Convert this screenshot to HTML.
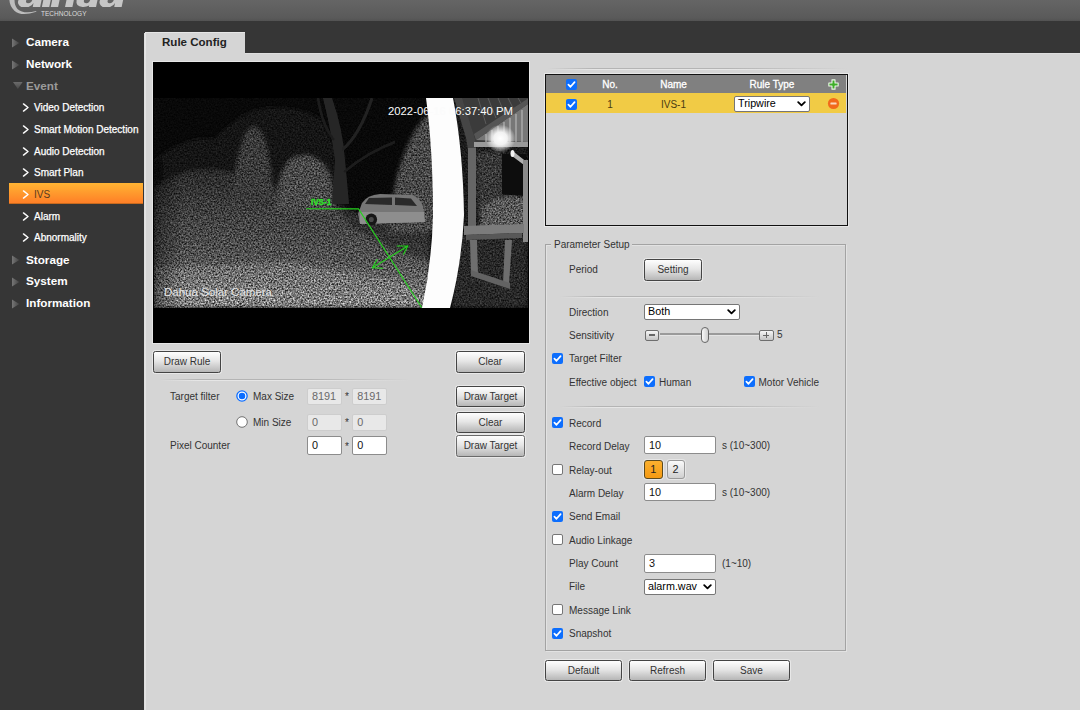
<!DOCTYPE html>
<html>
<head>
<meta charset="utf-8">
<title>IVS</title>
<style>
*{box-sizing:border-box;margin:0;padding:0}
html,body{width:1080px;height:710px;overflow:hidden}
body{position:relative;background:#d5d5d5;font-family:"Liberation Sans",sans-serif;font-size:12px;color:#333}
.abs{position:absolute}
#hdr{left:0;top:0;width:1080px;height:21px;background:linear-gradient(#656565,#5a5a5a 85%,#525252)}
#band{left:0;top:21px;width:1080px;height:32px;background:#363636}
#side{left:0;top:21px;width:144px;height:689px;background:#363636}
#sideedge{left:144px;top:33px;width:2px;height:677px;background:linear-gradient(90deg,#dcdcdc,#e6e6e6)}
#tab{left:145px;top:32px;width:100px;height:22px;background:#d5d5d5;border-left:1px solid #e6e6e6;border-top:1px solid #e6e6e6}
#tab span{position:absolute;left:16px;top:3px;font-weight:bold;font-size:11.55px;color:#222;white-space:nowrap}
#topline{left:145px;top:53px;width:935px;height:1px;background:#dedede}
.m1{position:absolute;left:26px;font-weight:bold;font-size:11.7px;color:#fff;white-space:nowrap;line-height:16px}
.m1.dim{color:#9a9a9a}
.tri{position:absolute;left:13px;width:0;height:0;border-top:5px solid transparent;border-bottom:5px solid transparent;border-left:8px solid #6e6e6e}
.trid{position:absolute;left:12px;width:0;height:0;border-left:6px solid transparent;border-right:6px solid transparent;border-top:8px solid #6e6e6e}
.m2{position:absolute;left:34px;font-size:10px;color:#fff;white-space:nowrap;line-height:14px;-webkit-text-stroke:0.25px #fff}
.chev{position:absolute;left:22px;width:8px;height:10px}
#sel{left:9px;top:183px;width:134px;height:21px;background:linear-gradient(#ffb433,#ff7f27);border-bottom:1px solid #c96a1e}
.btn{position:absolute;height:21.5px;border:1px solid #444;border-radius:2.5px;background:linear-gradient(#fefefe 0%,#e6e6e6 45%,#b6b6b6 100%);box-shadow:0 0 0 1px rgba(255,255,255,.45);font-size:10px;color:#333;text-align:center;line-height:19.4px;white-space:nowrap}
.lbl{position:absolute;margin-top:1px;white-space:nowrap;font-size:10px;color:#333;line-height:14px}
.inp{position:absolute;height:18px;background:#fff;border:1px solid #8c8c8c;border-radius:2px;font-size:10.86px;color:#111;line-height:16px;padding-left:4px;white-space:nowrap}
.inp.dis{background:#e8e8e8;color:#6a6a6a;border-color:#cdcdcd}
.cb{position:absolute;width:11px;height:11px;border-radius:2px;background:#0d6efd}
.cb svg{position:absolute;left:0;top:0}
.cb.off{background:#fff;border:1px solid #767676}
.hr{position:absolute;height:1px;background:linear-gradient(90deg,rgba(170,170,170,0),#b4b4b4 15%,#b4b4b4 60%,rgba(170,170,170,0))}
.hr2{position:absolute;height:1px;background:linear-gradient(90deg,rgba(240,240,240,0),#e6e6e6 15%,#e6e6e6 60%,rgba(240,240,240,0))}
.sel{position:absolute;height:16px;background:#fff;border:1px solid #767676;border-radius:2px;font-size:10.75px;color:#000;line-height:13px;padding-left:3px;white-space:nowrap}
.sel svg{position:absolute;right:3.2px;top:4px}
</style>
</head>
<body>
<div id="hdr" class="abs"></div>
<div id="band" class="abs"></div>
<div id="side" class="abs"></div>
<div id="sideedge" class="abs"></div>
<div id="topline" class="abs"></div>
<div id="tab" class="abs"><span>Rule Config</span></div>

<!-- logo -->
<svg class="abs" style="left:0;top:0" width="140" height="21" viewBox="0 0 140 21">
  <g transform="scale(0.125)" fill="#c6c6c6">
    <path d="M75 0 Q78 50 115 85 Q170 135 290 93 L290 88 Q190 116 140 72 Q116 44 116 0Z" fill="#bdbdbd"/>
    <g transform="scale(.985,1.1)">
    <path d="M150 0 Q135 30 172 50 L232 50 Q262 42 272 22 L266 50 L326 50 L338 0 L262 0 Q256 22 228 24 Q204 22 214 0Z"/>
    <path d="M352 0 L412 0 L400 50 L340 50Z"/>
    <path d="M424 0 L484 0 L472 50 L412 50Z M540 0 L600 0 L588 50 L528 50Z"/>
    <path d="M622 0 L682 0 Q676 24 702 24 Q726 22 732 0 L792 0 L780 50 L722 50 L724 40 Q700 52 670 50 Q612 48 622 0Z"/>
    <path d="M812 0 Q797 30 834 50 L894 50 Q924 42 934 22 L928 50 L988 50 L1000 0 L924 0 Q918 22 890 24 Q866 22 876 0Z"/>
    </g>
  </g>
  <text x="41" y="15.6" font-family="Liberation Sans, sans-serif" font-size="6.6" fill="#dcdcdc" textLength="45.5" lengthAdjust="spacingAndGlyphs">TECHNOLOGY</text>
</svg>

<!-- sidebar -->
<svg class="abs" style="left:12.3px;top:37.5px" width="8" height="10" viewBox="0 0 8 10"><defs><linearGradient id="tg37" x1="0" y1="0" x2="1" y2="0"><stop offset="0" stop-color="#767676"/><stop offset="1" stop-color="#444"/></linearGradient></defs><path d="M0 0.4 L7.4 5 L0 9.6Z" fill="url(#tg37)"/></svg><div class="m1" style="top:34.4px">Camera</div>
<svg class="abs" style="left:12.3px;top:59.5px" width="8" height="10" viewBox="0 0 8 10"><defs><linearGradient id="tg59" x1="0" y1="0" x2="1" y2="0"><stop offset="0" stop-color="#767676"/><stop offset="1" stop-color="#444"/></linearGradient></defs><path d="M0 0.4 L7.4 5 L0 9.6Z" fill="url(#tg59)"/></svg><div class="m1" style="top:56.2px">Network</div>
<svg class="abs" style="left:12.8px;top:81.8px" width="10" height="8" viewBox="0 0 10 8"><defs><linearGradient id="tgd" x1="0" y1="0" x2="0" y2="1"><stop offset="0" stop-color="#6c6c6c"/><stop offset="1" stop-color="#484848"/></linearGradient></defs><path d="M0 0 L9.6 0 L4.8 7Z" fill="url(#tgd)"/></svg><div class="m1 dim" style="top:78.2px">Event</div>
<div id="sel" class="abs"></div>
<div class="m2" style="top:101.2px">Video Detection</div>
<div class="m2" style="top:122.9px">Smart Motion Detection</div>
<div class="m2" style="top:144.5px">Audio Detection</div>
<div class="m2" style="top:166.2px">Smart Plan</div>
<div class="m2" style="top:187.9px;color:#5a3a20;-webkit-text-stroke:0">IVS</div>
<div class="m2" style="top:209.5px">Alarm</div>
<div class="m2" style="top:231.2px">Abnormality</div>
<svg class="abs" style="left:12.3px;top:254.5px" width="8" height="10" viewBox="0 0 8 10"><defs><linearGradient id="tg254" x1="0" y1="0" x2="1" y2="0"><stop offset="0" stop-color="#767676"/><stop offset="1" stop-color="#444"/></linearGradient></defs><path d="M0 0.4 L7.4 5 L0 9.6Z" fill="url(#tg254)"/></svg><div class="m1" style="top:251.6px">Storage</div>
<svg class="abs" style="left:12.3px;top:276.5px" width="8" height="10" viewBox="0 0 8 10"><defs><linearGradient id="tg276" x1="0" y1="0" x2="1" y2="0"><stop offset="0" stop-color="#767676"/><stop offset="1" stop-color="#444"/></linearGradient></defs><path d="M0 0.4 L7.4 5 L0 9.6Z" fill="url(#tg276)"/></svg><div class="m1" style="top:273.2px">System</div>
<svg class="abs" style="left:12.3px;top:298.5px" width="8" height="10" viewBox="0 0 8 10"><defs><linearGradient id="tg298" x1="0" y1="0" x2="1" y2="0"><stop offset="0" stop-color="#767676"/><stop offset="1" stop-color="#444"/></linearGradient></defs><path d="M0 0.4 L7.4 5 L0 9.6Z" fill="url(#tg298)"/></svg><div class="m1" style="top:294.8px">Information</div>

<svg class="chev" style="top:102.4px" viewBox="0 0 8 10"><path d="M1.5 1.9 L6 5.5 L1.5 9.1" fill="none" stroke="#fff" stroke-width="1.4" stroke-linecap="round" stroke-linejoin="round"/></svg>
<svg class="chev" style="top:124.1px" viewBox="0 0 8 10"><path d="M1.5 1.9 L6 5.5 L1.5 9.1" fill="none" stroke="#fff" stroke-width="1.4" stroke-linecap="round" stroke-linejoin="round"/></svg>
<svg class="chev" style="top:145.7px" viewBox="0 0 8 10"><path d="M1.5 1.9 L6 5.5 L1.5 9.1" fill="none" stroke="#fff" stroke-width="1.4" stroke-linecap="round" stroke-linejoin="round"/></svg>
<svg class="chev" style="top:167.4px" viewBox="0 0 8 10"><path d="M1.5 1.9 L6 5.5 L1.5 9.1" fill="none" stroke="#fff" stroke-width="1.4" stroke-linecap="round" stroke-linejoin="round"/></svg>
<svg class="chev" style="top:189.1px" viewBox="0 0 8 10"><path d="M1.5 1.9 L6 5.5 L1.5 9.1" fill="none" stroke="#fff" stroke-width="1.4" stroke-linecap="round" stroke-linejoin="round"/></svg>
<svg class="chev" style="top:210.7px" viewBox="0 0 8 10"><path d="M1.5 1.9 L6 5.5 L1.5 9.1" fill="none" stroke="#fff" stroke-width="1.4" stroke-linecap="round" stroke-linejoin="round"/></svg>
<svg class="chev" style="top:232.4px" viewBox="0 0 8 10"><path d="M1.5 1.9 L6 5.5 L1.5 9.1" fill="none" stroke="#fff" stroke-width="1.4" stroke-linecap="round" stroke-linejoin="round"/></svg>
<!-- video -->
<div class="abs" style="left:152px;top:61px;width:378px;height:283px;background:#e6e6e6"></div>
<svg class="abs" style="left:153px;top:62px" width="376" height="281" viewBox="153 62 376 281">
<defs>
<filter id="nz" x="0" y="0" width="100%" height="100%" color-interpolation-filters="sRGB">
  <feTurbulence type="fractalNoise" baseFrequency="0.62" numOctaves="2" seed="7" result="t"/>
  <feColorMatrix in="t" type="matrix" values="1.7 0 0 0 -0.36  1.7 0 0 0 -0.36  1.7 0 0 0 -0.36  0 0 0 0 1" result="n"/>
  <feComposite in="SourceGraphic" in2="n" operator="arithmetic" k1="1.5" k2="0.22" k3="0" k4="0"/>
</filter>
<filter id="b2"><feGaussianBlur stdDeviation="2"/></filter>
<filter id="b4"><feGaussianBlur stdDeviation="4"/></filter>
<filter id="b1"><feGaussianBlur stdDeviation="0.7"/></filter>
<linearGradient id="vig" x1="0" y1="0" x2="1" y2="0"><stop offset="0" stop-color="#000" stop-opacity=".45"/><stop offset="1" stop-color="#000" stop-opacity="0"/></linearGradient>
<linearGradient id="gnd" x1="0" y1="0" x2="0" y2="1"><stop offset="0" stop-color="#2c2c2c"/><stop offset=".33" stop-color="#444"/><stop offset=".65" stop-color="#565656"/><stop offset="1" stop-color="#808080"/></linearGradient>
<radialGradient id="lamp"><stop offset="0" stop-color="#fff"/><stop offset=".45" stop-color="#f2f2f2"/><stop offset="1" stop-color="#fff" stop-opacity="0"/></radialGradient>
<clipPath id="imgclip"><rect x="154" y="98" width="374" height="210"/></clipPath>
</defs>
<rect x="153" y="62" width="376" height="281" fill="#000"/>
<g clip-path="url(#imgclip)">
 <g filter="url(#nz)">
  <rect x="154" y="98" width="374" height="210" fill="#090909"/>
  <g filter="url(#b2)">
   <!-- faint upper-left foliage -->
   <path d="M154 160 Q185 135 215 138 Q240 112 262 108 Q300 104 322 120 L336 150 L336 200 L154 200Z" fill="#181818"/>
   <!-- ground -->
   <path d="M154 190 Q172 172 198 170 Q225 168 240 176 L300 196 L336 204 L360 214 L430 226 L430 308 L154 308Z" fill="url(#gnd)"/>
   <path d="M154 268 L290 262 L400 280 L430 300 L430 308 L154 308Z" fill="#a0a0a0" opacity=".3"/>
   <path d="M336 206 L430 224 L430 262 L392 250 L350 226Z" fill="#000" opacity=".3"/>
   <rect x="150" y="160" width="34" height="150" fill="url(#vig)"/>
   <!-- centre bushes -->
   <path d="M232 205 Q234 160 246 134 Q254 120 262 134 Q270 150 274 205Z" fill="#3c3c3c"/>
   <path d="M276 210 Q278 172 290 160 Q310 148 326 168 Q334 180 334 212Z" fill="#4e4e4e"/>
   <!-- bush left of pole -->
   <path d="M390 232 Q392 185 402 160 Q412 130 426 116 L436 112 L436 232Z" fill="#4c4c4c"/>
   <!-- right of pole: dark base, foliage, brush pile, ground -->
   <rect x="452" y="98" width="76" height="210" fill="#1c1c1c"/>
   <path d="M476 152 L503 152 Q506 190 498 208 L478 212Z" fill="#3a3a3a"/>
   <path d="M482 208 Q500 192 528 198 L528 228 L480 228Z" fill="#5c5c5c"/>
   <path d="M452 236 L528 232 L528 308 L452 308Z" fill="#2a2a2a"/>
  </g>
 </g>
 <!-- smooth structures -->
 <g filter="url(#b1)">
  <!-- trees -->
  <path d="M332 204 L335 160 Q331 130 323 98 L332 98 Q343 130 345 160 L349 204Z" fill="#282828"/>
  <path d="M342 150 Q360 135 372 98" stroke="#232323" stroke-width="3" fill="none"/>
  <path d="M344 172 Q368 152 395 142" stroke="#1f1f1f" stroke-width="2.5" fill="none"/>
  <path d="M334 140 Q322 125 318 98" stroke="#1e1e1e" stroke-width="2.5" fill="none"/>
  <!-- roof -->
  <path d="M458 98 L528 98 L528 142 L476 142 L470 128Z" fill="#3a3a3a"/>
  <path d="M476 140 L528 104 L528 142Z" fill="#777"/>
  <path d="M474 134 L528 98.5 L528 104 L476 140Z" fill="#555"/>
  <g stroke="#5c5c5c" stroke-width="1"><path d="M478 98 L486 124 M488 98 L496 118 M498 98 L504 112 M508 98 L513 108 M518 98 L521 103"/></g>
  <g stroke="#b5b5b5" stroke-width="1.2"><path d="M486 134 L486 142 M492 130 L492 142 M498 126 L498 142 M504 122 L504 142 M510 118 L510 142 M516 114 L516 142 M522 110 L522 142"/></g>
  <path d="M454 98 L462 98 L476 142 L476 150 L468 150 L466 138Z" fill="#454545"/>
  <rect x="474" y="142" width="54" height="5" fill="#9a9a9a"/>
  <rect x="468" y="148" width="8" height="78" fill="#666"/>
  <path d="M502 154 L526 154 L526 196 L502 194Z" fill="#080808"/>
  <path d="M514 152 L528 163 L528 168 L512 156Z" fill="#b0b0b0"/>
  <rect x="523" y="160" width="5" height="82" fill="#8a8a8a"/>
  <!-- table -->
  <path d="M464 226 L524 224 L524 233 L464 235Z" fill="#7c7c7c"/>
  <path d="M466 235 L522 233 L522 238 L466 240Z" fill="#595959"/>
  <path d="M470 240 L477 240 L478 274 L471 274Z" fill="#6e6e6e"/>
  <path d="M505 240 L512 240 L509 284 L503 284Z" fill="#6e6e6e"/>
  <path d="M471 270 L510 283 L510 289 L471 276Z" fill="#646464"/>
  <!-- car -->
  <path d="M358 214 L362 203 Q367 195 380 194 L412 195 Q419 197 423 206 L425 222 L360 224Z" fill="#767676"/>
  <path d="M360 212 L424 212 L425 222 L360 224Z" fill="#8e8e8e"/>
  <path d="M365 204 L369 198 L392 197.5 L392 205Z M395 197.5 L411 198.5 L417 206 L395 205Z" fill="#2a2a2a"/>
  <ellipse cx="371.3" cy="219.5" rx="5.8" ry="6" fill="#181818"/>
  <ellipse cx="371.3" cy="219.5" rx="2.4" ry="2.6" fill="#4a4a4a"/>
 </g>
 <!-- lamp -->
 <ellipse cx="500.5" cy="138.5" rx="15" ry="14" fill="url(#lamp)"/>
 <ellipse cx="512.5" cy="153.5" rx="2" ry="3.5" fill="#f4f4f4"/>
 <!-- pole -->
 <path d="M426 98 Q433 150 433 215 Q432 262 422 308 L450 308 Q462 262 464 215 Q463 150 453 98Z" fill="#fdfdfd" filter="url(#b1)"/>
</g>
<!-- overlay text -->
<text x="388" y="114.5" font-family="Liberation Sans, sans-serif" font-size="11.2" fill="#fbfbfb" textLength="125" lengthAdjust="spacingAndGlyphs">2022-06-16 06:37:40 PM</text>
<text x="164" y="296" font-family="Liberation Sans, sans-serif" font-size="11.2" fill="#e4e4e4" textLength="108" lengthAdjust="spacingAndGlyphs">Dahua Solar Camera</text>
<!-- rule -->
<g stroke="#24d41d" stroke-width="1.1" fill="none" stroke-linecap="round">
 <path d="M306.7 208.8 L358.5 208.9 L421.5 307.3"/>
 <path d="M372.5 267.8 L407.7 246"/>
 <path d="M397.2 246 L407.7 246 L403.5 254.3"/>
 <path d="M377 259.5 L372.5 267.8 L382.7 268.3"/>
</g>
<text x="310.9" y="205.4" font-family="Liberation Sans, sans-serif" font-size="9.6" font-weight="bold" fill="#2fe327" stroke="#2fe327" stroke-width=".35" textLength="20.4" lengthAdjust="spacingAndGlyphs">IVS-1</text>
</svg>


<!-- form -->
<div class="btn" style="left:153px;top:351.2px;width:68px;">Draw Rule</div>
<div class="btn" style="left:456px;top:351.2px;width:68.5px;">Clear</div>
<div class="hr" style="left:160px;top:379px;width:250px"></div><div class="hr2" style="left:160px;top:380px;width:250px"></div>
<div class="lbl" style="left:170px;top:389px;">Target filter</div>
<svg class="abs" style="left:234.7px;top:388.9px" width="14" height="14" viewBox="0 0 14 14"><circle cx="7" cy="7" r="5.15" fill="#fff" stroke="#0a6cff" stroke-width="1.3"/><circle cx="7" cy="7" r="3.25" fill="#0a6cff"/></svg>
<div class="lbl" style="left:253px;top:389px;">Max Size</div>
<div class="inp dis" style="left:307px;top:387.5px;width:34.5px;height:17.5px;line-height:15.5px;">8191</div>
<div class="lbl" style="left:345px;top:389px;">*</div>
<div class="inp dis" style="left:352.2px;top:387.5px;width:34.4px;height:17.5px;line-height:15.5px;">8191</div>
<div class="btn" style="left:456px;top:385.5px;width:69px;">Draw Target</div>
<svg class="abs" style="left:234.7px;top:414.5px" width="14" height="14" viewBox="0 0 14 14"><circle cx="7" cy="7" r="5.3" fill="#fff" stroke="#727272" stroke-width="1"/></svg>
<div class="lbl" style="left:253px;top:415px;">Min Size</div>
<div class="inp dis" style="left:307px;top:413.5px;width:34.5px;height:17.5px;line-height:15.5px;">0</div>
<div class="lbl" style="left:345px;top:415px;">*</div>
<div class="inp dis" style="left:352.2px;top:413.5px;width:34.4px;height:17.5px;line-height:15.5px;">0</div>
<div class="btn" style="left:456px;top:411.5px;width:69px;">Clear</div>
<div class="lbl" style="left:170px;top:437.5px;">Pixel Counter</div>
<div class="inp" style="left:307px;top:436px;width:34.5px;height:18.5px;line-height:16.5px;">0</div>
<div class="lbl" style="left:345px;top:438.5px;">*</div>
<div class="inp" style="left:352.2px;top:436px;width:34.4px;height:18.5px;line-height:16.5px;">0</div>
<div class="btn" style="left:456px;top:435px;width:69px;border-color:#6a6a6a">Draw Target</div>
<div class="hr" style="left:548px;top:68px;width:300px"></div><div class="hr2" style="left:548px;top:69px;width:300px"></div>
<div class="abs" style="left:545px;top:74px;width:303px;height:152px;border:1px solid #111;box-shadow:0 0 0 1px #e6e6e6"></div>
<div class="abs" style="left:546px;top:75px;width:300px;height:18px;background:#808080"></div>
<div class="abs" style="left:546px;top:93px;width:300px;height:20px;background:#f1cb45"></div>
<div class="cb" style="left:566px;top:79px"><svg width="11" height="11" viewBox="0 0 11 11"><path d="M2.4 5.7 L4.5 7.8 L8.6 3.1" fill="none" stroke="#fff" stroke-width="1.7" stroke-linecap="round" stroke-linejoin="round"/></svg></div>
<div class="cb" style="left:566px;top:99px"><svg width="11" height="11" viewBox="0 0 11 11"><path d="M2.4 5.7 L4.5 7.8 L8.6 3.1" fill="none" stroke="#fff" stroke-width="1.7" stroke-linecap="round" stroke-linejoin="round"/></svg></div>
<div class="lbl" style="left:570px;width:80px;text-align:center;top:77.2px;color:#fff;-webkit-text-stroke:0.3px #fff">No.</div>
<div class="lbl" style="left:633.5px;width:80px;text-align:center;top:77.2px;color:#fff;-webkit-text-stroke:0.3px #fff">Name</div>
<div class="lbl" style="left:732px;width:80px;text-align:center;top:77.2px;color:#fff;-webkit-text-stroke:0.3px #fff">Rule Type</div>
<div class="lbl" style="left:570px;width:80px;text-align:center;top:96.7px;color:#4a3b12">1</div>
<div class="lbl" style="left:633.5px;width:80px;text-align:center;top:96.7px;color:#4a3b12">IVS-1</div>
<div class="sel" style="left:734px;top:96px;width:76px">Tripwire<svg width="9" height="6" viewBox="0 0 9 6"><path d="M1.2 1.2 L4.5 4.4 L7.8 1.2" fill="none" stroke="#000" stroke-width="1.8" stroke-linecap="round" stroke-linejoin="round"/></svg></div>
<svg class="abs" style="left:828.3px;top:79.4px" width="11" height="11" viewBox="0 0 13 13"><path d="M4.7 1 h3.6 v3.7 h3.7 v3.6 h-3.7 v3.7 h-3.6 v-3.7 h-3.7 v-3.6 h3.7z" fill="#3fae2a" stroke="#eef7ea" stroke-width="1.3" stroke-linejoin="round"/></svg>
<svg class="abs" style="left:826.5px;top:96.6px" width="13" height="13" viewBox="0 0 13 13"><circle cx="6.5" cy="6.5" r="5.6" fill="#f26a1b"/><rect x="3.4" y="5.4" width="6.2" height="2.1" rx=".6" fill="#fbd9bf"/></svg>
<div class="abs" style="left:545px;top:244px;width:301px;height:407px;border:1px solid #a3a3a3;box-shadow:inset 1px 1px 0 #e2e2e2, 1px 1px 0 #e2e2e2"></div>
<div class="abs" style="left:551px;top:238px;width:81px;height:14px;background:#d5d5d5"></div>
<div class="lbl" style="left:554px;top:236.5px;">Parameter Setup</div>
<div class="lbl" style="left:569px;top:262px;">Period</div>
<div class="btn" style="left:644px;top:259px;width:58px;">Setting</div>
<div class="hr" style="left:560px;top:296px;width:260px"></div><div class="hr2" style="left:560px;top:297px;width:260px"></div>
<div class="lbl" style="left:569px;top:304.5px;">Direction</div>
<div class="sel" style="left:644px;top:303.5px;width:96px">Both<svg width="9" height="6" viewBox="0 0 9 6"><path d="M1.2 1.2 L4.5 4.4 L7.8 1.2" fill="none" stroke="#000" stroke-width="1.8" stroke-linecap="round" stroke-linejoin="round"/></svg></div>
<div class="lbl" style="left:569px;top:328px;">Sensitivity</div>
<div class="abs" style="left:660px;top:333px;width:100px;height:2px;background:#9a9a9a;box-shadow:0 1px 0 #e4e4e4"></div>
<div class="abs" style="left:645px;top:329.5px;width:14px;height:11.5px;border:1px solid #6e6e6e;border-radius:2px;background:linear-gradient(#f6f6f6,#c4c4c4)"><div style="position:absolute;left:3px;top:3.7px;width:6px;height:1.5px;background:#666"></div></div>
<div class="abs" style="left:759px;top:329.5px;width:14.5px;height:11.5px;border:1px solid #6e6e6e;border-radius:2px;background:linear-gradient(#f6f6f6,#c4c4c4)"><div style="position:absolute;left:3.2px;top:4.1px;width:6px;height:1px;background:#666"></div><div style="position:absolute;left:5.7px;top:1.6px;width:1px;height:6px;background:#666"></div></div>
<div class="abs" style="left:701px;top:327px;width:8px;height:15.5px;border:1px solid #666;border-radius:4px;background:linear-gradient(90deg,#fafafa,#cfcfcf)"></div>
<div class="lbl" style="left:777px;top:327px;">5</div>
<div class="cb" style="left:552px;top:353px"><svg width="11" height="11" viewBox="0 0 11 11"><path d="M2.4 5.7 L4.5 7.8 L8.6 3.1" fill="none" stroke="#fff" stroke-width="1.7" stroke-linecap="round" stroke-linejoin="round"/></svg></div>
<div class="lbl" style="left:569px;top:351px;">Target Filter</div>
<div class="lbl" style="left:569px;top:375px;">Effective object</div>
<div class="cb" style="left:644px;top:376px"><svg width="11" height="11" viewBox="0 0 11 11"><path d="M2.4 5.7 L4.5 7.8 L8.6 3.1" fill="none" stroke="#fff" stroke-width="1.7" stroke-linecap="round" stroke-linejoin="round"/></svg></div>
<div class="lbl" style="left:659px;top:375px;">Human</div>
<div class="cb" style="left:744px;top:376px"><svg width="11" height="11" viewBox="0 0 11 11"><path d="M2.4 5.7 L4.5 7.8 L8.6 3.1" fill="none" stroke="#fff" stroke-width="1.7" stroke-linecap="round" stroke-linejoin="round"/></svg></div>
<div class="lbl" style="left:758.5px;top:375px;">Motor Vehicle</div>
<div class="hr" style="left:560px;top:406px;width:260px"></div><div class="hr2" style="left:560px;top:407px;width:260px"></div>
<div class="cb" style="left:552px;top:417px"><svg width="11" height="11" viewBox="0 0 11 11"><path d="M2.4 5.7 L4.5 7.8 L8.6 3.1" fill="none" stroke="#fff" stroke-width="1.7" stroke-linecap="round" stroke-linejoin="round"/></svg></div>
<div class="lbl" style="left:569px;top:415.5px;">Record</div>
<div class="lbl" style="left:569px;top:439px;">Record Delay</div>
<div class="inp" style="left:644px;top:435.5px;width:72px;height:18.5px;line-height:16.5px;">10</div>
<div class="lbl" style="left:722px;top:437.5px;">s (10~300)</div>
<div class="cb off" style="left:552px;top:464px"></div>
<div class="lbl" style="left:569px;top:462.5px;">Relay-out</div>
<div class="abs" style="left:644px;top:460px;width:18.5px;height:18.5px;border:1px solid #5c4a1e;border-radius:3px;background:linear-gradient(#fbb02f,#f59a12);font-size:10.86px;line-height:17px;text-align:center;color:#222;box-shadow:0 0 0 1px rgba(255,255,255,.4)">1</div>
<div class="abs" style="left:666.5px;top:460px;width:18px;height:18.5px;border:1px solid #9a9a9a;border-radius:3px;background:linear-gradient(#fafafa,#d0d0d0);font-size:10.86px;line-height:17px;text-align:center;color:#222;box-shadow:0 0 0 1px rgba(255,255,255,.4)">2</div>
<div class="lbl" style="left:569px;top:485.5px;">Alarm Delay</div>
<div class="inp" style="left:644px;top:482.5px;width:72px;height:18.5px;line-height:16.5px;">10</div>
<div class="lbl" style="left:722px;top:484.5px;">s (10~300)</div>
<div class="cb" style="left:552px;top:510.5px"><svg width="11" height="11" viewBox="0 0 11 11"><path d="M2.4 5.7 L4.5 7.8 L8.6 3.1" fill="none" stroke="#fff" stroke-width="1.7" stroke-linecap="round" stroke-linejoin="round"/></svg></div>
<div class="lbl" style="left:569px;top:509px;">Send Email</div>
<div class="cb off" style="left:552px;top:534px"></div>
<div class="lbl" style="left:569px;top:532.5px;">Audio Linkage</div>
<div class="lbl" style="left:569px;top:556px;">Play Count</div>
<div class="inp" style="left:644px;top:554px;width:72px;height:18.5px;line-height:16.5px;">3</div>
<div class="lbl" style="left:722px;top:556px;">(1~10)</div>
<div class="lbl" style="left:569px;top:579px;">File</div>
<div class="sel" style="left:644px;top:578.5px;width:72px">alarm.wav<svg width="9" height="6" viewBox="0 0 9 6"><path d="M1.2 1.2 L4.5 4.4 L7.8 1.2" fill="none" stroke="#000" stroke-width="1.8" stroke-linecap="round" stroke-linejoin="round"/></svg></div>
<div class="cb off" style="left:552px;top:604px"></div>
<div class="lbl" style="left:569px;top:602.5px;">Message Link</div>
<div class="cb" style="left:552px;top:627.5px"><svg width="11" height="11" viewBox="0 0 11 11"><path d="M2.4 5.7 L4.5 7.8 L8.6 3.1" fill="none" stroke="#fff" stroke-width="1.7" stroke-linecap="round" stroke-linejoin="round"/></svg></div>
<div class="lbl" style="left:569px;top:626px;">Snapshot</div>
<div class="btn" style="left:545px;top:659.5px;width:77px;">Default</div>
<div class="btn" style="left:629px;top:659.5px;width:77px;">Refresh</div>
<div class="btn" style="left:713px;top:659.5px;width:77px;">Save</div>
</body>
</html>
